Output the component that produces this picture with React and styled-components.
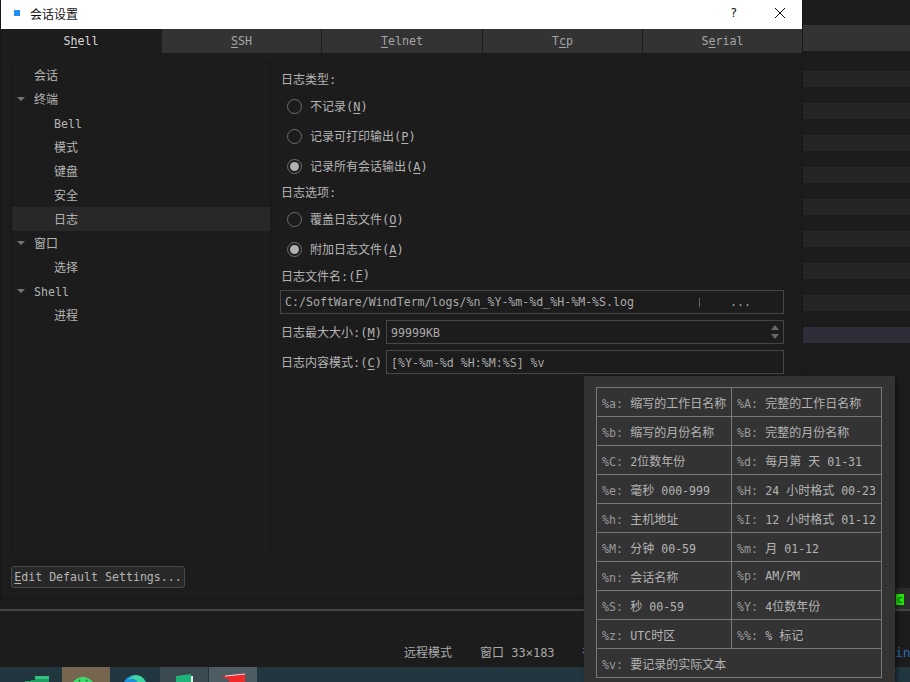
import React from "react";
import styled, { createGlobalStyle } from "styled-components";

const mono = `"DejaVu Sans Mono", "Liberation Mono", "Noto Sans CJK SC", monospace`;

const GlobalStyle = createGlobalStyle`
  html, body {
    margin: 0;
    padding: 0;
    background: #1c1c1c;
  }
`;

const Page = styled.div`
  position: relative;
  width: 910px;
  height: 682px;
  overflow: hidden;
  display: flex;
  flex-direction: column;
  background: #1c1c1c;
  color: #b4b4b4;
  font-family: ${mono};
  font-size: 12px;
`;

const Upper = styled.div`
  display: flex;
  height: 609px;
`;

const Dialog = styled.div`
  width: 803px;
  height: 600px;
  flex: none;
  box-sizing: border-box;
  border: 1px solid #171717;
  border-top: none;
  display: flex;
  flex-direction: column;
  background: #1c1c1c;
`;

const TitleBar = styled.div`
  height: 29px;
  flex: none;
  box-sizing: border-box;
  display: flex;
  align-items: center;
  padding: 0 0 3px 13px;
  background: #fff;
  color: #111;
`;

const AppMark = styled.span`
  width: 6px;
  height: 6px;
  background: #2090f8;
  margin-right: 10px;
`;

const TitleText = styled.span`
  flex: 1;
  font-family: "Noto Sans CJK SC", sans-serif;
  font-size: 12px;
`;

const HelpButton = styled.span`
  width: 14px;
  margin-right: 30px;
  font-size: 12px;
`;

const CloseButton = styled.svg`
  width: 12px;
  height: 12px;
  margin-right: 16px;
`;

const TabBar = styled.div`
  height: 24px;
  flex: none;
  display: flex;
  gap: 1px;
  background: #1c1c1c;
`;

const Tab = styled.div`
  width: ${({ $w }) => $w}px;
  flex: none;
  display: flex;
  align-items: center;
  justify-content: center;
  font-size: 11.6px;
  background: ${({ $active }) => ($active ? "#1c1c1c" : "#333333")};
  color: ${({ $active }) => ($active ? "#d8d8d8" : "#a6a6a6")};
`;

const Body = styled.div`
  flex: 1;
  display: flex;
  padding: 9px 18px 0 10px;
  gap: 9px;
`;

const LeftColumn = styled.div`
  width: 260px;
  flex: none;
  display: flex;
  flex-direction: column;
  align-items: flex-start;
`;

const Tree = styled.div`
  width: 100%;
  height: 493px;
  box-sizing: border-box;
  border: 1px solid #171717;
  margin-bottom: 11px;
`;

const TreeRow = styled.div`
  height: 24px;
  box-sizing: border-box;
  display: flex;
  align-items: center;
  padding: 0 0 2px ${({ $level }) => ($level === 2 ? 42 : 22)}px;
  position: relative;
  background: ${({ $selected }) => ($selected ? "#282828" : "transparent")};
`;

const Caret = styled.span`
  position: absolute;
  left: 5px;
  top: 10px;
  width: 0;
  height: 0;
  border-left: 4px solid transparent;
  border-right: 4px solid transparent;
  border-top: 4px solid #777;
`;

const TreeLatin = styled.span`
  font-size: 11.6px;
  padding-top: 4px;
`;

const EditButton = styled.div`
  width: 174px;
  height: 22px;
  box-sizing: border-box;
  display: flex;
  align-items: center;
  justify-content: center;
  border: 1px solid #484848;
  border-radius: 3px;
  background: #282828;
  font-size: 11.6px;
  white-space: nowrap;
`;

const Form = styled.div`
  flex: 1;
  display: flex;
  flex-direction: column;
  padding-top: 5px;
`;

const SectionLabel = styled.div`
  height: ${({ $h }) => $h || 24}px;
  flex: none;
  box-sizing: border-box;
  display: flex;
  align-items: center;
  padding: 0 0 2px 1px;
`;

const RadioRow = styled.div`
  height: 30px;
  flex: none;
  display: flex;
  align-items: center;
  padding-left: 7px;
  gap: 8px;
`;

const RadioCircle = styled.span`
  width: 15px;
  height: 15px;
  box-sizing: border-box;
  border: 1px solid #6e6e6e;
  border-radius: 50%;
  display: flex;
  align-items: center;
  justify-content: center;
  &::after {
    content: "";
    display: ${({ $checked }) => ($checked ? "block" : "none")};
    width: 9px;
    height: 9px;
    border-radius: 50%;
    background: #b0b0b0;
  }
`;

const RadioText = styled.span`
  padding-bottom: 2px;
`;

const InputBox = styled.div`
  flex: 1;
  height: 24px;
  box-sizing: border-box;
  display: flex;
  align-items: center;
  padding: ${({ $low }) => ($low ? 2 : 0)}px 0 0 4px;
  border: 1px solid #474747;
  font-size: 11.6px;
  color: #aaa;
  white-space: nowrap;
`;

const InputText = styled.span`
  flex: 1;
`;

const FileRow = styled.div`
  display: flex;
  margin-top: 2px;
`;

const FieldRow = styled.div`
  display: flex;
  align-items: center;
  margin-top: 6px;
`;

const FieldLabel = styled.span`
  width: 106px;
  flex: none;
  padding: 0 0 2px 1px;
  box-sizing: border-box;
  white-space: nowrap;
`;

const BrowseDivider = styled.span`
  width: 1px;
  height: 9px;
  background: #666;
`;

const BrowseDots = styled.span`
  width: 83px;
  text-align: center;
  padding-right: 2px;
  box-sizing: border-box;
`;

const Spinner = styled.svg`
  width: 8px;
  height: 14px;
  margin: 0 4px 2px 0;
`;

const Terminal = styled.div`
  flex: 1;
  display: flex;
  flex-direction: column;
`;

const TermLine = styled.div`
  height: ${({ $h }) => $h}px;
  flex: none;
  background: ${({ $bg }) => $bg || "transparent"};
`;

const TermStatus = styled.div`
  margin-top: auto;
  height: 21px;
  background: #2c2c2c;
  display: flex;
  align-items: flex-end;
  padding-left: 93px;
`;

const GreenCell = styled.span`
  width: 8px;
  height: 11px;
  margin-bottom: 4px;
  background: #1fe600;
  color: #143;
  font-size: 10px;
  line-height: 11px;
  text-align: center;
`;

const Separator = styled.div`
  height: 2px;
  flex: none;
  background: #444;
`;

const StatusBar = styled.div`
  height: 56px;
  flex: none;
  box-sizing: border-box;
  padding: 33px 0 0 404px;
  display: flex;
  gap: 28px;
  line-height: 18px;
  color: #aaa;
  white-space: nowrap;
`;

const StatusEnd = styled.span`
  margin-left: auto;
  width: 15px;
  overflow: hidden;
  color: #2a6cb8;
  font-size: 13px;
`;

const Taskbar = styled.div`
  height: 15px;
  flex: none;
  display: flex;
  gap: 1px;
  padding-left: 13px;
  background: #22363f;
  overflow: hidden;
`;

const TaskTile = styled.div`
  width: 48px;
  display: flex;
  justify-content: center;
  background: ${({ $bg }) => $bg || "transparent"};
`;

const TaskIcon = styled.svg`
  width: 26px;
  height: 15px;
`;

const HelpPopup = styled.div`
  position: absolute;
  left: 584px;
  top: 376px;
  width: 311px;
  height: 306px;
  box-sizing: border-box;
  padding: 11px 13px 0 12px;
  background: #333333;
  box-shadow: 2px 2px 4px rgba(0, 0, 0, 0.5);
`;

const HelpTable = styled.table`
  width: 286px;
  border-collapse: collapse;
  table-layout: fixed;
`;

const HelpCell = styled.td`
  height: 28px;
  padding: 0 0 0 5px;
  border: 1px solid #787878;
  color: #b4b4b4;
  white-space: nowrap;
  overflow: hidden;
  &:first-child {
    width: 129px;
  }
`;

const HelpLatin = styled.span`
  font-size: 11.6px;
`;

const HelpKey = styled(HelpLatin)`
  color: #9a9a9a;
`;

const Mn = styled.u`
  text-underline-offset: 2px;
`;

const treeItems = [
  { label: "会话", level: 1 },
  { label: "终端", level: 1, open: true },
  { label: "Bell", level: 2, latin: true },
  { label: "模式", level: 2 },
  { label: "键盘", level: 2 },
  { label: "安全", level: 2 },
  { label: "日志", level: 2, selected: true },
  { label: "窗口", level: 1, open: true },
  { label: "选择", level: 2 },
  { label: "Shell", level: 1, open: true, latin: true },
  { label: "进程", level: 2 },
];

const helpRows = [
  [["%a:", "缩写的工作日名称"], ["%A:", "完整的工作日名称"]],
  [["%b:", "缩写的月份名称"], ["%B:", "完整的月份名称"]],
  [["%C:", "2位数年份"], ["%d:", "每月第 天 01-31"]],
  [["%e:", "毫秒 000-999"], ["%H:", "24 小时格式 00-23"]],
  [["%h:", "主机地址"], ["%I:", "12 小时格式 01-12"]],
  [["%M:", "分钟 00-59"], ["%m:", "月 01-12"]],
  [["%n:", "会话名称"], ["%p:", "AM/PM"]],
  [["%S:", "秒 00-59"], ["%Y:", "4位数年份"]],
  [["%z:", "UTC时区"], ["%%:", "% 标记"]],
];

// terminal rows behind the dialog: alternating stripes, then the current line
const termLines = [
  { h: 25 },
  { h: 26, bg: "#333333" },
  { h: 20 },
  ...Array.from({ length: 8 }).flatMap(() => [{ h: 16, bg: "#252525" }, { h: 16 }]),
  { h: 16, bg: "#2e2e3a" },
];

const Radio = ({ checked, children }) => (
  <RadioRow>
    <RadioCircle $checked={checked} />
    <RadioText>{children}</RadioText>
  </RadioRow>
);

// latin runs are a bit smaller so they come out 7px wide next to the 12px CJK
const HelpText = ({ text }) =>
  text.split(/([\u4e00-\u9fff]+)/).map((part, i) =>
    i % 2 ? part : <HelpLatin key={i}>{part}</HelpLatin>
  );

const App = () => {
  return (
    <Page>
      <GlobalStyle />
      <Upper>
        <div>
          <Dialog>
            <TitleBar>
              <AppMark />
              <TitleText>会话设置</TitleText>
              <HelpButton>?</HelpButton>
              <CloseButton viewBox="0 0 12 12">
                <path d="M1 1l10 10M11 1L1 11" stroke="#111" strokeWidth="1" fill="none" />
              </CloseButton>
            </TitleBar>
            <TabBar>
              <Tab $w={160} $active>S<Mn>h</Mn>ell</Tab>
              <Tab $w={159}><Mn>S</Mn>SH</Tab>
              <Tab $w={160}><Mn>T</Mn>elnet</Tab>
              <Tab $w={159}>T<Mn>c</Mn>p</Tab>
              <Tab $w={159}>S<Mn>e</Mn>rial</Tab>
            </TabBar>
            <Body>
              <LeftColumn>
                <Tree>
                  {treeItems.map((item) => (
                    <TreeRow key={item.label} $level={item.level} $selected={item.selected}>
                      {item.open && <Caret />}
                      {item.latin ? <TreeLatin>{item.label}</TreeLatin> : item.label}
                    </TreeRow>
                  ))}
                </Tree>
                <EditButton><span><Mn>E</Mn>dit Default Settings...</span></EditButton>
              </LeftColumn>
              <Form>
                <SectionLabel>日志类型:</SectionLabel>
                <Radio>不记录(<Mn>N</Mn>)</Radio>
                <Radio>记录可打印输出(<Mn>P</Mn>)</Radio>
                <Radio checked>记录所有会话输出(<Mn>A</Mn>)</Radio>
                <SectionLabel $h={23}>日志选项:</SectionLabel>
                <Radio>覆盖日志文件(<Mn>O</Mn>)</Radio>
                <Radio checked>附加日志文件(<Mn>A</Mn>)</Radio>
                <SectionLabel>日志文件名:(<Mn>F</Mn>)</SectionLabel>
                <FileRow>
                  <InputBox>
                    <InputText>C:/SoftWare/WindTerm/logs/%n_%Y-%m-%d_%H-%M-%S.log</InputText>
                    <BrowseDivider />
                    <BrowseDots>...</BrowseDots>
                  </InputBox>
                </FileRow>
                <FieldRow>
                  <FieldLabel>日志最大大小:(<Mn>M</Mn>)</FieldLabel>
                  <InputBox $low>
                    <InputText>99999KB</InputText>
                    <Spinner viewBox="0 0 8 14">
                      <path d="M4 0l4 5H0zM0 9h8l-4 5z" fill="#666" />
                    </Spinner>
                  </InputBox>
                </FieldRow>
                <FieldRow>
                  <FieldLabel>日志内容模式:(<Mn>C</Mn>)</FieldLabel>
                  <InputBox $low>[%Y-%m-%d %H:%M:%S] %v</InputBox>
                </FieldRow>
              </Form>
            </Body>
          </Dialog>
        </div>
        <Terminal>
          {termLines.map((line, i) => (
            <TermLine key={i} $h={line.h} $bg={line.bg} />
          ))}
          <TermStatus><GreenCell>c</GreenCell></TermStatus>
        </Terminal>
      </Upper>
      <Separator />
      <StatusBar>
        <span>远程模式</span>
        <span>窗口 33×183</span>
        <span>行</span>
        <StatusEnd>in</StatusEnd>
      </StatusBar>
      <Taskbar>
        <TaskTile>
          <TaskIcon viewBox="0 0 26 15">
            <path d="M1 15v-1h6v-1h4V9h14v6z" fill="#1f9e62" />
            <path d="M11 9h14v3H11z" fill="#35c184" />
          </TaskIcon>
        </TaskTile>
        <TaskTile $bg="#766650">
          <TaskIcon viewBox="0 0 26 15">
            <circle cx="10" cy="22" r="12" fill="#3fdc6e" />
            <circle cx="6.5" cy="13.5" r="1" fill="#1c7d41" />
            <circle cx="13.5" cy="13.5" r="1" fill="#1c7d41" />
          </TaskIcon>
        </TaskTile>
        <TaskTile>
          <TaskIcon viewBox="0 0 26 15">
            <circle cx="13" cy="20" r="12" fill="#1c8fdc" />
            <path d="M13 8a12 12 0 0 1 11 8h-8a6 6 0 0 0-11-1 12 12 0 0 1 8-7z" fill="#3fd6a0" />
          </TaskIcon>
        </TaskTile>
        <TaskTile $bg="#3a4a50">
          <TaskIcon viewBox="0 0 26 15">
            <path d="M5 9l15-2v8H5z" fill="#1fb37a" />
            <path d="M20 9h2v6h-2z" fill="#d8eee4" />
          </TaskIcon>
        </TaskTile>
        <TaskTile $bg="#4d5c62">
          <TaskIcon viewBox="0 0 26 15">
            <path d="M1 10L25 7v8H9v-3z" fill="#f02a2a" />
            <path d="M5 9l20-2" stroke="#ffd0d0" strokeWidth="1" fill="none" />
          </TaskIcon>
        </TaskTile>
      </Taskbar>
      <HelpPopup>
        <HelpTable>
          <tbody>
            {helpRows.map((row) => (
              <tr key={row[0][0]}>
                {row.map(([key, text]) => (
                  <HelpCell key={key}><HelpKey>{key}</HelpKey> <HelpText text={text} /></HelpCell>
                ))}
              </tr>
            ))}
            <tr>
              <HelpCell colSpan={2}><HelpKey>%v:</HelpKey> <HelpText text="要记录的实际文本" /></HelpCell>
            </tr>
          </tbody>
        </HelpTable>
      </HelpPopup>
    </Page>
  );
};

export default App;
